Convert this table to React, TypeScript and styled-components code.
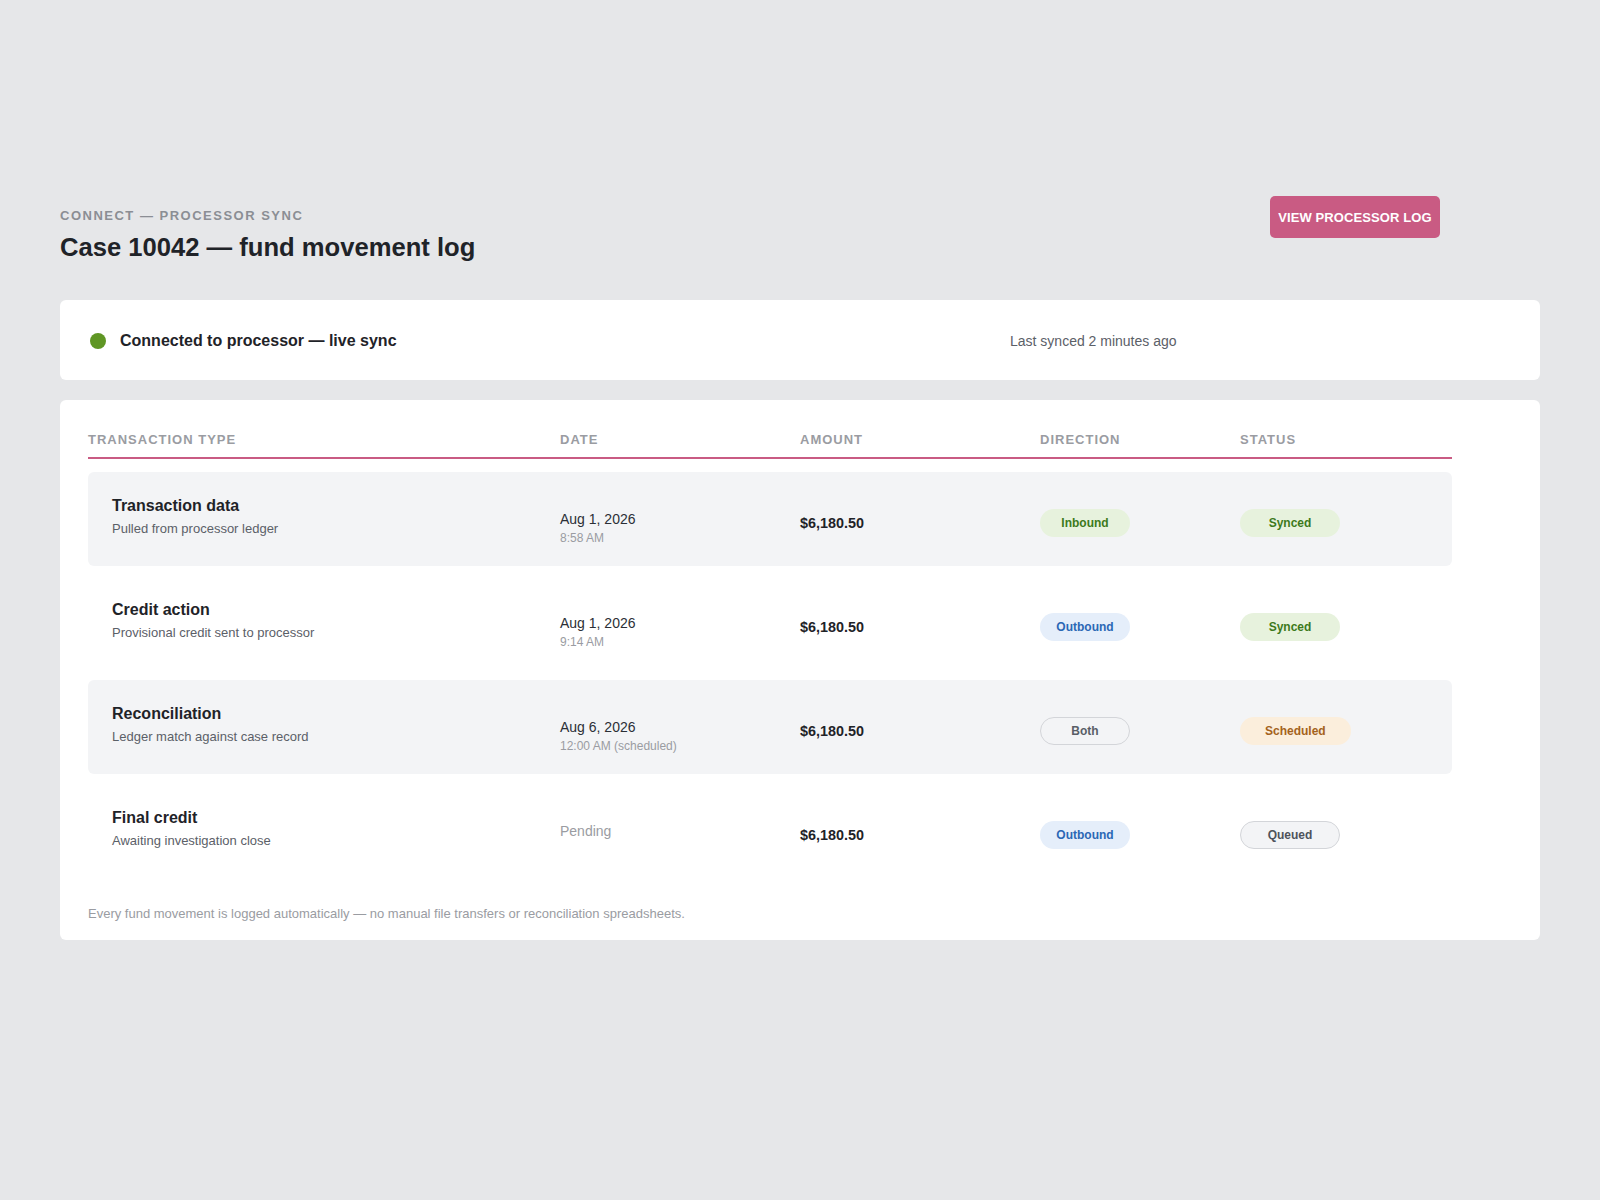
import React from "react";
import styled, { createGlobalStyle } from "styled-components";

const GlobalStyle = createGlobalStyle`
  html, body {
    margin: 0;
    padding: 0;
    background: #e6e7e9;
  }
  body {
    font-family: "Liberation Sans", Arial, sans-serif;
    color: #1f2328;
  }
`;

type Tone = "green" | "blue" | "outline" | "amber" | "grey";

const tones: Record<Tone, { bg: string; fg: string; border: string }> = {
  green: { bg: "#e7f2dd", fg: "#3d7a1c", border: "transparent" },
  blue: { bg: "#e5eefa", fg: "#2b68b5", border: "transparent" },
  outline: { bg: "transparent", fg: "#595e66", border: "#d3d5d9" },
  amber: { bg: "#fbeedc", fg: "#a4621c", border: "transparent" },
  grey: { bg: "#f3f4f6", fg: "#4e535b", border: "#d3d5d9" },
};

type Movement = {
  title: string;
  note: string;
  date?: string;
  time?: string;
  direction: [string, Tone];
  status: [string, Tone];
};

const rows: Movement[] = [
  {
    title: "Transaction data",
    note: "Pulled from processor ledger",
    date: "Aug 1, 2026",
    time: "8:58 AM",
    direction: ["Inbound", "green"],
    status: ["Synced", "green"],
  },
  {
    title: "Credit action",
    note: "Provisional credit sent to processor",
    date: "Aug 1, 2026",
    time: "9:14 AM",
    direction: ["Outbound", "blue"],
    status: ["Synced", "green"],
  },
  {
    title: "Reconciliation",
    note: "Ledger match against case record",
    date: "Aug 6, 2026",
    time: "12:00 AM (scheduled)",
    direction: ["Both", "outline"],
    status: ["Scheduled", "amber"],
  },
  {
    title: "Final credit",
    note: "Awaiting investigation close",
    direction: ["Outbound", "blue"],
    status: ["Queued", "grey"],
  },
];

const Page = styled.main`
  padding: 196px 60px 80px;
`;

const Header = styled.header`
  display: flex;
  justify-content: space-between;
  align-items: flex-start;
  padding-right: 100px;
  margin-bottom: 37px;
`;

const HeaderText = styled.div`
  padding-top: 12px;
`;

const Eyebrow = styled.div`
  font-size: 13px;
  line-height: 16px;
  font-weight: 700;
  letter-spacing: 1.5px;
  text-transform: uppercase;
  color: #8b8e94;
`;

const Title = styled.h1`
  margin: 7px 0 0;
  font-size: 25.6px;
  line-height: 32px;
  font-weight: 700;
  color: #1f2328;
`;

const PrimaryButton = styled.button`
  height: 42px;
  width: 170px;
  padding: 0;
  border: none;
  border-radius: 5px;
  background: #c95b83;
  color: #fff;
  font-family: inherit;
  font-size: 13px;
  font-weight: 700;
  letter-spacing: 0.1px;
  text-transform: uppercase;
  cursor: pointer;
`;

const Card = styled.section`
  background: #fff;
  border-radius: 6px;
`;

const SyncBar = styled(Card)`
  height: 80px;
  box-sizing: border-box;
  padding: 2px 30px 0;
  display: flex;
  align-items: center;
  margin-bottom: 20px;
`;

const SyncState = styled.div`
  width: 920px;
  display: flex;
  align-items: center;
  gap: 14px;
  font-size: 16px;
  font-weight: 700;
  color: #1f2328;
`;

const Dot = styled.span`
  width: 16px;
  height: 16px;
  border-radius: 50%;
  background: #5f9624;
  flex: none;
`;

const SyncTime = styled.div`
  font-size: 14px;
  color: #5b6068;
`;

const LogCard = styled(Card)`
  padding: 32px 28px 18px;
`;

const columns = "472px 240px 240px 200px 212px";

const HeadRow = styled.div`
  display: grid;
  grid-template-columns: ${columns};
  padding-bottom: 9px;
  border-bottom: 2px solid #c95b83;
  margin-bottom: 13px;
  width: 1364px;
`;

const HeadCell = styled.div`
  font-size: 13px;
  line-height: 16px;
  font-weight: 700;
  letter-spacing: 1px;
  text-transform: uppercase;
  color: #9a9ca2;
`;

const Body = styled.div`
  display: flex;
  flex-direction: column;
  gap: 10px;
  width: 1364px;
`;

const Row = styled.div<{ $shaded: boolean }>`
  display: grid;
  grid-template-columns: ${columns};
  align-items: center;
  height: 94px;
  border-radius: 6px;
  background: ${({ $shaded }) => ($shaded ? "#f3f4f6" : "transparent")};
`;

const TypeCell = styled.div`
  padding: 0 0 5px 24px;
`;

const RowTitle = styled.div`
  font-size: 16px;
  line-height: 20px;
  font-weight: 700;
  color: #1f2328;
`;

const RowNote = styled.div`
  margin-top: 5px;
  font-size: 13px;
  line-height: 16px;
  color: #5b6068;
`;

const DateCell = styled.div`
  padding-top: 17px;
`;

const DateMain = styled.div`
  font-size: 14px;
  line-height: 18px;
  color: #2b2f36;
`;

const DateSub = styled.div`
  margin-top: 3px;
  font-size: 12px;
  line-height: 15px;
  color: #9a9ca2;
`;

const Pending = styled.div`
  font-size: 14px;
  line-height: 18px;
  color: #9a9ca2;
  margin-top: -17px;
`;

const ValueCell = styled.div`
  padding-top: 8px;
`;

const Amount = styled.div`
  font-size: 14.4px;
  font-weight: 700;
  color: #1f2328;
`;

const Badge = styled.span<{ $tone: Tone; $min: number }>`
  display: inline-flex;
  align-items: center;
  justify-content: center;
  box-sizing: border-box;
  height: 28px;
  min-width: ${({ $min }) => $min}px;
  padding: 0 24px;
  border-radius: 14px;
  border: 1px solid ${({ $tone }) => tones[$tone].border};
  background: ${({ $tone }) => tones[$tone].bg};
  color: ${({ $tone }) => tones[$tone].fg};
  font-size: 12px;
  font-weight: 700;
`;

const DirectionBadge = styled(Badge)`
  padding: 0 14px;
`;

const Footnote = styled.p`
  margin: 28px 0 0;
  font-size: 13px;
  line-height: 16px;
  color: #9a9ca2;
`;

export default function App() {
  return (
    <>
      <GlobalStyle />
      <Page>
        <Header>
          <HeaderText>
            <Eyebrow>Connect — Processor Sync</Eyebrow>
            <Title>Case 10042 — fund movement log</Title>
          </HeaderText>
          <PrimaryButton>View processor log</PrimaryButton>
        </Header>

        <SyncBar>
          <SyncState>
            <Dot />
            Connected to processor — live sync
          </SyncState>
          <SyncTime>Last synced 2 minutes ago</SyncTime>
        </SyncBar>

        <LogCard>
          <HeadRow>
            <HeadCell>Transaction type</HeadCell>
            <HeadCell>Date</HeadCell>
            <HeadCell>Amount</HeadCell>
            <HeadCell>Direction</HeadCell>
            <HeadCell>Status</HeadCell>
          </HeadRow>
          <Body>
            {rows.map((r, i) => (
              <Row key={r.title} $shaded={i % 2 === 0}>
                <TypeCell>
                  <RowTitle>{r.title}</RowTitle>
                  <RowNote>{r.note}</RowNote>
                </TypeCell>
                <DateCell>
                  {r.date ? (
                    <>
                      <DateMain>{r.date}</DateMain>
                      <DateSub>{r.time}</DateSub>
                    </>
                  ) : (
                    <Pending>Pending</Pending>
                  )}
                </DateCell>
                <ValueCell>
                  <Amount>$6,180.50</Amount>
                </ValueCell>
                <ValueCell>
                  <DirectionBadge $tone={r.direction[1]} $min={90}>
                    {r.direction[0]}
                  </DirectionBadge>
                </ValueCell>
                <ValueCell>
                  <Badge $tone={r.status[1]} $min={100}>
                    {r.status[0]}
                  </Badge>
                </ValueCell>
              </Row>
            ))}
          </Body>
          <Footnote>
            Every fund movement is logged automatically — no manual file
            transfers or reconciliation spreadsheets.
          </Footnote>
        </LogCard>
      </Page>
    </>
  );
}
